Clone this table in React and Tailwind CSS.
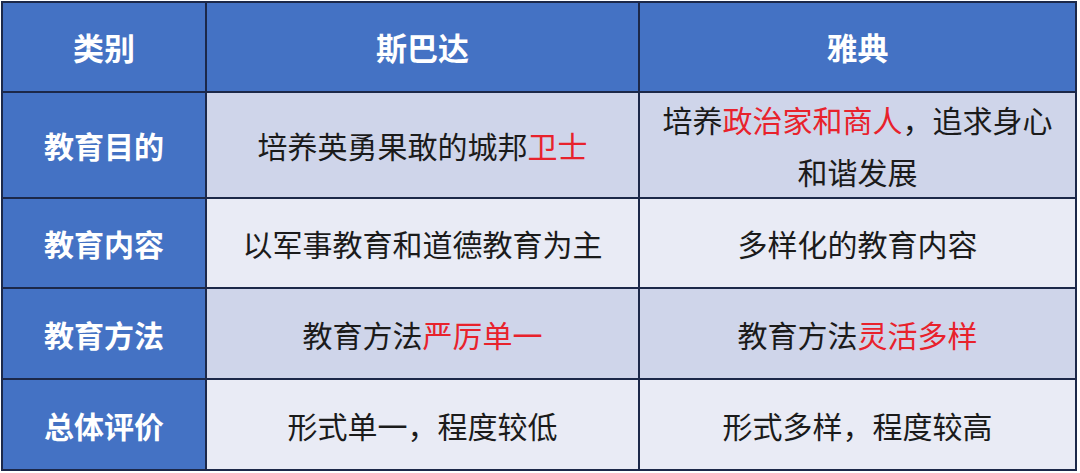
import React from 'react';

const rows = [
  {
    label: '教育目的',
    sparta: [['培养英勇果敢的城邦', false], ['卫士', true]],
    athens: [['培养', false], ['政治家和商人', true], ['，追求身心和谐发展', false]],
    height: 'h-[103px]',
    bg: 'bg-[#cfd5ea]',
  },
  {
    label: '教育内容',
    sparta: [['以军事教育和道德教育为主', false]],
    athens: [['多样化的教育内容', false]],
    height: 'h-[90px]',
    bg: 'bg-[#e9ebf5]',
  },
  {
    label: '教育方法',
    sparta: [['教育方法', false], ['严厉单一', true]],
    athens: [['教育方法', false], ['灵活多样', true]],
    height: 'h-[91px]',
    bg: 'bg-[#cfd5ea]',
  },
  {
    label: '总体评价',
    sparta: [['形式单一，程度较低', false]],
    athens: [['形式多样，程度较高', false]],
    height: 'h-[91px]',
    bg: 'bg-[#e9ebf5]',
  },
];

const Rich = ({ parts }) => (
  <>
    {parts.map(([text, red], i) => (
      <span key={i} className={red ? 'text-[#e8222c]' : ''}>
        {text}
      </span>
    ))}
  </>
);

export default function App() {
  return (
    <div className="w-[1080px] h-[473px] bg-white pt-px pl-px overflow-hidden font-['Microsoft_YaHei','Noto_Sans_CJK_SC',sans-serif]">
      <table className="w-[1076px] border-collapse border-2 border-[#1c2849] table-fixed text-[30px] leading-[52px] text-[#1b1b1b]">
        <colgroup>
          <col className="w-[204px]" />
          <col className="w-[433px]" />
          <col />
        </colgroup>
        <thead>
          <tr className="h-[90px] bg-[#4472c4] text-white font-bold text-[31px]">
            <th className="border-2 border-[#1c2849]">类别</th>
            <th className="border-2 border-[#1c2849]">斯巴达</th>
            <th className="border-2 border-[#1c2849]">雅典</th>
          </tr>
        </thead>
        <tbody>
          {rows.map((row) => (
            <tr key={row.label} className={`${row.height} ${row.bg}`}>
              <td className="border-2 border-[#1c2849] bg-[#4472c4] text-white font-bold text-center">
                {row.label}
              </td>
              <td className="border-2 border-[#1c2849] text-center">
                <Rich parts={row.sparta} />
              </td>
              <td className="border-2 border-[#1c2849] text-center px-[20px]">
                <Rich parts={row.athens} />
              </td>
            </tr>
          ))}
        </tbody>
      </table>
    </div>
  );
}
